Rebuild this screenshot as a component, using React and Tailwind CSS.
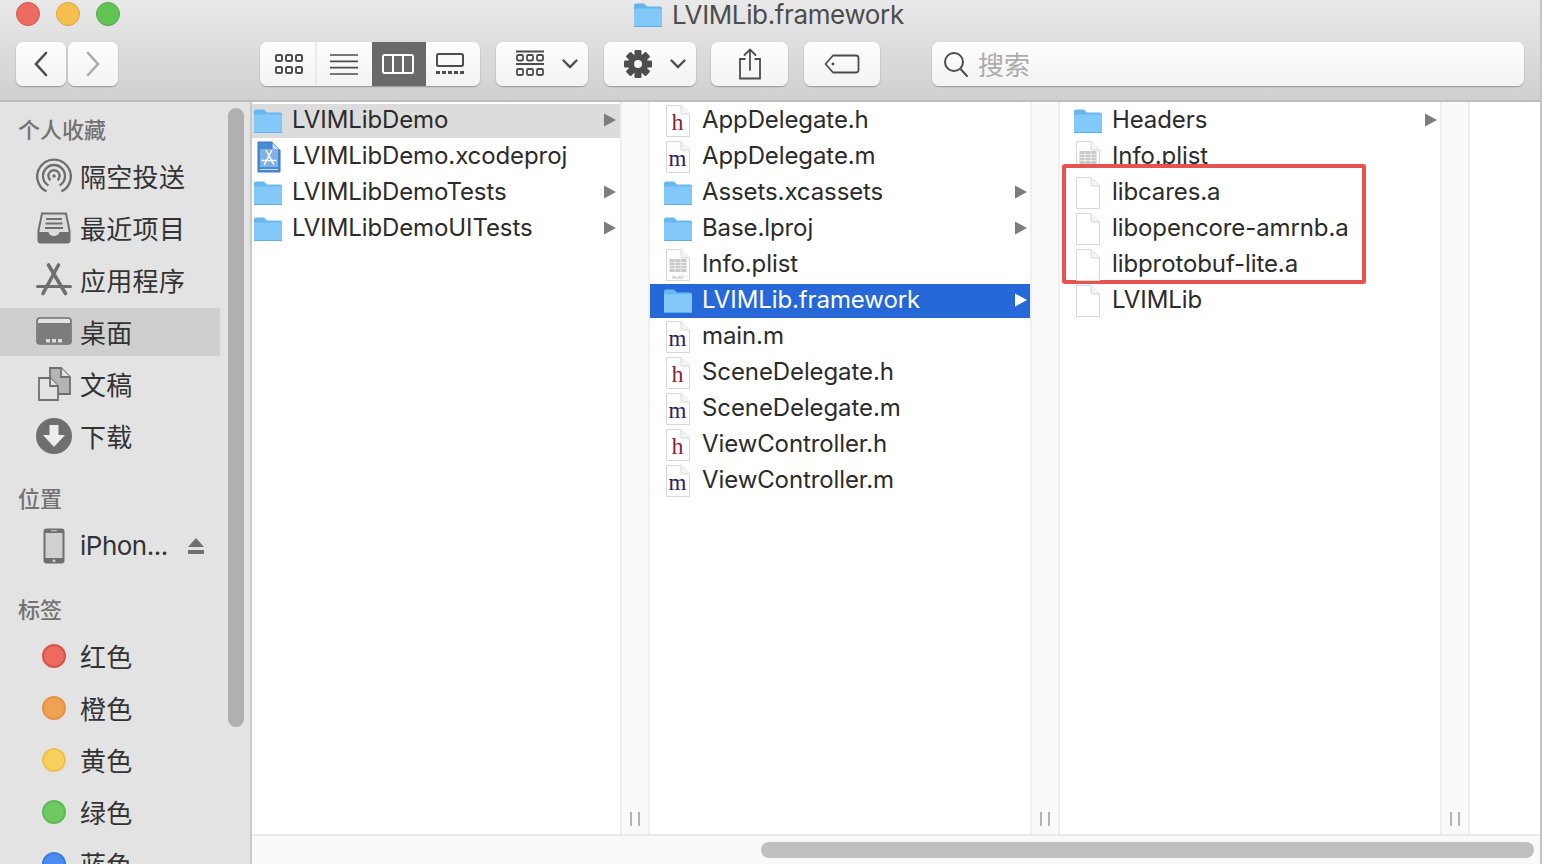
import React from "react";

const CJK = "font-['Noto_Sans_CJK_SC','Noto_Sans',sans-serif]";
const UI = "font-['Inter','Noto_Sans_CJK_SC',sans-serif]";

function Folder({ title }) {
  return (
    <svg width="30" height="26" viewBox="0 0 30 26" className="shrink-0">
      <path d="M1 3.5a2 2 0 0 1 2-2h8l3 3h13a2 2 0 0 1 2 2v4H1z" fill={title ? "#63b4ee" : "#68b8f0"} />
      <rect x="1" y="6.5" width="28" height="18.5" rx="1.5" fill="#82c9fa" />
      <rect x="1" y="24" width="28" height="1" fill="#62aee6" />
    </svg>
  );
}

function Page({ children }) {
  return (
    <svg width="30" height="34" viewBox="0 0 30 34" className="shrink-0">
      <path d="M3.5 1.5H18L26.5 10V32.5H3.5Z" fill="#fff" stroke="#d8d8d8" />
      <path d="M18 1.5V10H26.5" fill="#f4f4f4" stroke="#d8d8d8" />
      {children}
    </svg>
  );
}

function SourceFile({ letter }) {
  return (
    <Page>
      <text
        x="14.5"
        y="26"
        textAnchor="middle"
        fontFamily="Liberation Serif, serif"
        fontSize={letter === "h" ? 24 : 23}
        fill={letter === "h" ? "#8c2233" : "#30205f"}
      >
        {letter}
      </text>
    </Page>
  );
}

function Plist() {
  return (
    <Page>
      <rect x="6.5" y="11" width="17" height="13" fill="#c9c9c9" />
      <path d="M6.5 14.5h17M6.5 17.5h17M6.5 20.5h17M12 11v13M18 11v13" stroke="#f4f4f4" strokeWidth="0.8" />
      <text x="15" y="30.5" textAnchor="middle" fontFamily="Liberation Sans, sans-serif" fontSize="4.2" fill="#8a8a8a">
        PLIST
      </text>
    </Page>
  );
}

function Xcodeproj() {
  return (
    <svg width="30" height="34" viewBox="0 0 30 34" className="shrink-0">
      <path d="M5 2H19L27 10V32H5Z" fill="#4a8bd6" stroke="#3a76c0" />
      <path d="M19 2V10H27" fill="#c4dcf5" stroke="#3a76c0" />
      <rect x="7" y="9" width="18" height="18" fill="#7fb0e8" />
      <path d="M19 10L11 25M13 10L21 25M8.5 20.5h15" stroke="#fff" strokeWidth="1.5" fill="none" />
      <rect x="7" y="29" width="18" height="1" fill="#c4dcf5" />
    </svg>
  );
}

function Row({ name, icon, arrow, active, selected, scrolled }) {
  return (
    <div className="h-9 pt-[2px]">
      <div
        className={`h-[34px] flex items-center text-[24px] whitespace-nowrap ${
          selected ? "bg-[#2668d8] text-white" : active ? "bg-[#dcdcdc] text-[#2b2b2b]" : "text-[#2b2b2b]"
        } ${scrolled ? "pl-[1px]" : "pl-[13px]"}`}
      >
        <span className={`flex justify-start items-center shrink-0 ${scrolled ? "w-[39px]" : "w-[38px]"}`}>{icon}</span>
        <span className={`flex-1 tracking-[-0.1px] pb-[2px] ${scrolled ? "" : "pl-[1px]"}`}>{name}</span>
        {arrow && (
          <svg width="14" height="14" viewBox="0 0 14 14" className={`shrink-0 -mt-[2px] ${scrolled ? "mr-[3px]" : "mr-[2px]"}`}>
            <path d="M1 0.5L13 7L1 13.5Z" fill={selected ? "#fff" : "#7d7d7d"} />
          </svg>
        )}
      </div>
    </div>
  );
}

function Gutter() {
  return (
    <div className="w-[30px] shrink-0 bg-[#fafafa] border-x-2 border-[#efefef] flex items-end justify-center gap-[6px] pb-2">
      <span className="w-[2px] h-[14px] bg-[#b5b5b5]" />
      <span className="w-[2px] h-[14px] bg-[#b5b5b5]" />
    </div>
  );
}

function NavBtn({ children, className = "" }) {
  return (
    <div
      className={`h-[44px] rounded-[7px] bg-linear-to-b from-[#fdfdfd] to-[#f3f3f3] shadow-[0_1px_1.5px_rgba(0,0,0,0.3)] flex items-center justify-center ${className}`}
    >
      {children}
    </div>
  );
}

function Chevron() {
  return (
    <svg width="18" height="12" viewBox="0 0 18 12">
      <path d="M2.5 2.5L9 9L15.5 2.5" fill="none" stroke="#4d4d4d" strokeWidth="2.4" strokeLinecap="round" />
    </svg>
  );
}

function Gear() {
  const teeth = [0, 45, 90, 135];
  return (
    <svg width="30" height="30" viewBox="0 0 30 30">
      {teeth.map((r) => (
        <rect key={r} x="11.5" y="1" width="7" height="28" rx="1" fill="#4d4d4d" transform={`rotate(${r} 15 15)`} />
      ))}
      <circle cx="15" cy="15" r="10" fill="#4d4d4d" />
      <circle cx="15" cy="15" r="4" fill="#f9f9f9" />
    </svg>
  );
}

function Toolbar() {
  return (
    <div className="h-[102px] shrink-0 bg-linear-to-b from-[#e9e9e9] to-[#d0d0d0] border-b-2 border-[#bdbdbd]">
      <div className="h-[42px] flex items-start pl-4 pt-[2px]">
        <div className="flex gap-4">
          <span className="w-6 h-6 rounded-full bg-[#ec6a5f] border border-[#d5564c]" />
          <span className="w-6 h-6 rounded-full bg-[#f6bd4f] border border-[#dea63c]" />
          <span className="w-6 h-6 rounded-full bg-[#61c354] border border-[#52a846]" />
        </div>
        <div className="ml-[513px] flex items-center gap-[9px] -mt-[2px]">
          <Folder title />
          <span className={`${UI} text-[26px] leading-[30px] text-[#4c4c4c] tracking-[-0.37px]`}>LVIMLib.framework</span>
        </div>
      </div>
      <div className="flex pl-4 pr-4">
        <div className="flex gap-[2px]">
          <NavBtn className="w-[50px]">
            <svg width="18" height="26" viewBox="0 0 18 26">
              <path d="M14 2L4 13L14 24" fill="none" stroke="#4d4d4d" strokeWidth="2.6" strokeLinecap="round" />
            </svg>
          </NavBtn>
          <NavBtn className="w-[50px]">
            <svg width="18" height="26" viewBox="0 0 18 26">
              <path d="M4 2L14 13L4 24" fill="none" stroke="#ababab" strokeWidth="2.6" strokeLinecap="round" />
            </svg>
          </NavBtn>
        </div>

        <NavBtn className="ml-[142px] w-[220px] overflow-hidden !justify-start">
          <div className="w-[57px] h-full flex items-center justify-center pl-[3px] border-r-2 border-[#ebebeb]">
            <svg width="30" height="22" viewBox="0 0 30 22" fill="none" stroke="#4d4d4d" strokeWidth="2">
              <rect x="2" y="2" width="6" height="6" rx="1.5" />
              <rect x="12" y="2" width="6" height="6" rx="1.5" />
              <rect x="22" y="2" width="6" height="6" rx="1.5" />
              <rect x="2" y="14" width="6" height="6" rx="1.5" />
              <rect x="12" y="14" width="6" height="6" rx="1.5" />
              <rect x="22" y="14" width="6" height="6" rx="1.5" />
            </svg>
          </div>
          <div className="w-[55px] h-full flex items-center justify-center pr-[2px]">
            <svg width="30" height="22" viewBox="0 0 30 22" stroke="#4d4d4d" strokeWidth="1.7">
              <path d="M1 2h28M1 8.3h28M1 14.6h28M1 21h28" />
            </svg>
          </div>
          <div className="w-[54px] h-full flex items-center justify-center pr-[2px] bg-[#696969]">
            <svg width="32" height="20" viewBox="0 0 32 20" fill="none" stroke="#fff" strokeWidth="2">
              <rect x="1" y="1" width="30" height="18" rx="1.5" />
              <path d="M11 1v18M21 1v18" />
            </svg>
          </div>
          <div className="w-[54px] h-full flex items-center pl-[9px]">
            <svg width="30" height="22" viewBox="0 0 30 22" fill="none" stroke="#4d4d4d" strokeWidth="2">
              <rect x="2" y="1" width="26" height="12" rx="1.5" />
              <path d="M1 19.5h28" strokeDasharray="4 2" strokeWidth="3" />
            </svg>
          </div>
        </NavBtn>

        <NavBtn className="ml-4 w-[92px] gap-4 !justify-start pl-[19px]">
          <svg width="30" height="28" viewBox="0 0 30 28" fill="none" stroke="#4d4d4d" strokeWidth="1.8">
            <path d="M1 1.5h28M1 14h28" />
            <rect x="2" y="5" width="6" height="5.5" rx="1.2" />
            <rect x="12" y="5" width="6" height="5.5" rx="1.2" />
            <rect x="22" y="5" width="6" height="5.5" rx="1.2" />
            <rect x="2" y="19" width="6" height="6" rx="1.2" />
            <rect x="12" y="19" width="6" height="6" rx="1.2" />
            <rect x="22" y="19" width="6" height="6" rx="1.2" />
          </svg>
          <Chevron />
        </NavBtn>

        <NavBtn className="ml-4 w-[92px] gap-4 !justify-start pl-[19px]">
          <Gear />
          <Chevron />
        </NavBtn>

        <NavBtn className="ml-[15px] w-[77px]">
          <svg width="24" height="32" viewBox="0 0 24 32" fill="none" stroke="#4d4d4d" strokeWidth="1.8">
            <path d="M7.5 11H2v19.5h20V11h-5.5" />
            <path d="M12 22V2M6.5 7L12 1.5L17.5 7" strokeLinecap="round" />
          </svg>
        </NavBtn>

        <NavBtn className="ml-4 w-[76px]">
          <svg width="36" height="20" viewBox="0 0 36 20" fill="none" stroke="#4d4d4d" strokeWidth="1.8">
            <path d="M9 1.5H32a2.5 2.5 0 0 1 2.5 2.5V16a2.5 2.5 0 0 1-2.5 2.5H9L1.5 10Z" strokeLinejoin="round" />
            <circle cx="9" cy="10" r="1.4" fill="#4d4d4d" stroke="none" />
          </svg>
        </NavBtn>

        <NavBtn className="ml-[52px] flex-1 !justify-start pl-[11px] gap-[9px]">
          <svg width="26" height="28" viewBox="0 0 26 28" fill="none" stroke="#4d4d4d" strokeWidth="2">
            <circle cx="11" cy="12" r="9" />
            <path d="M17.5 19L24 26" strokeLinecap="round" />
          </svg>
          <span className={`${CJK} text-[26px] leading-none text-[#ababab]`}>搜索</span>
        </NavBtn>
      </div>
    </div>
  );
}

const SIDE_ICONS = {
  airdrop: (
    <svg width="36" height="36" viewBox="0 0 36 36" fill="none" stroke="#6f6f6f" strokeWidth="2.4">
      <path d="M10.5 33.5A16.8 16.8 0 1 1 25.5 33.5" />
      <path d="M12.5 27.5A11 11 0 1 1 23.5 27.5" />
      <path d="M14.5 22.2A5.6 5.6 0 1 1 21.5 22.2" />
      <circle cx="18" cy="18" r="1.8" fill="#6f6f6f" stroke="none" />
    </svg>
  ),
  recents: (
    <svg width="36" height="36" viewBox="0 0 36 36">
      <path d="M6 3.5h24l3.5 17v10a2 2 0 0 1-2 2h-27a2 2 0 0 1-2-2v-10Z" fill="#dcdcdc" stroke="#6f6f6f" strokeWidth="2" />
      <path d="M10 9h16M9.5 13.5h17M9 18h18" stroke="#6f6f6f" strokeWidth="1.8" />
      <path d="M2.5 22h10a5.5 4 0 0 0 11 0h10v8.5a2 2 0 0 1-2 2h-27a2 2 0 0 1-2-2Z" fill="#6f6f6f" />
    </svg>
  ),
  apps: (
    <svg width="36" height="36" viewBox="0 0 36 36" fill="none" stroke="#6f6f6f" strokeLinecap="round">
      <path d="M12.5 3L29.5 31.5" strokeWidth="3.6" />
      <path d="M22.5 3L7 31.5" strokeWidth="3.6" />
      <path d="M1.5 24.5h33" strokeWidth="3" />
    </svg>
  ),
  desktop: (
    <svg width="36" height="30" viewBox="0 0 36 30">
      <rect x="1" y="1" width="34" height="26" rx="3" fill="#e3e3e3" stroke="#6f6f6f" strokeWidth="1.6" />
      <path d="M1.5 6h33v19a2 2 0 0 1-2 2h-29a2 2 0 0 1-2-2Z" fill="#7c7c7c" />
      <rect x="10" y="22" width="4" height="3.5" fill="#dcdcdc" />
      <rect x="16" y="22" width="4" height="3.5" fill="#dcdcdc" />
      <rect x="22" y="22" width="4" height="3.5" fill="#dcdcdc" />
    </svg>
  ),
  docs: (
    <svg width="36" height="36" viewBox="0 0 36 36" stroke="#6f6f6f" strokeWidth="1.8">
      <path d="M14 2h11l9 9v17H14Z" fill="#b4b4b4" />
      <path d="M25 2v9h9" fill="#e3e3e3" />
      <path d="M3 12h11l8 8v14H3Z" fill="#e3e3e3" />
      <path d="M14 12v8h8" fill="#e3e3e3" />
    </svg>
  ),
  downloads: (
    <svg width="36" height="36" viewBox="0 0 36 36">
      <circle cx="18" cy="18" r="18" fill="#6f6f6f" />
      <path d="M13.5 7h9v10h6.5L18 29L7 17h6.5Z" fill="#ededed" />
    </svg>
  ),
  iphone: (
    <svg width="22" height="36" viewBox="0 0 22 36">
      <rect x="0.5" y="0.5" width="21" height="35" rx="3" fill="#6f6f6f" />
      <rect x="2.5" y="5" width="17" height="25" fill="#d0d0d0" />
      <rect x="8" y="2.2" width="6" height="1" fill="#d0d0d0" />
      <circle cx="11" cy="32.8" r="1.4" fill="#d0d0d0" />
    </svg>
  ),
};

function SideHead({ label, className }) {
  return (
    <div className={`pl-[18px] ${className}`}>
      <span className={`${CJK} block text-[22px] leading-[28px] font-medium text-[#737373]`}>{label}</span>
    </div>
  );
}

function SideItem({ icon, label, active }) {
  return (
    <div className="h-[52px] flex items-center">
      <div className={`h-12 w-[220px] flex items-center pl-9 ${active ? "bg-[#cfcfcf]" : ""}`}>
        <span className="w-9 flex justify-center shrink-0">{icon}</span>
        <span className={`${CJK} ml-2 text-[26px] leading-none text-[#333] tracking-[0.3px]`}>{label}</span>
      </div>
    </div>
  );
}

function TagItem({ label, fill, ring }) {
  return (
    <div className="h-[52px] flex items-center pl-[42px]">
      <span className="w-6 h-6 rounded-full border-2 shrink-0" style={{ backgroundColor: fill, borderColor: ring }} />
      <span className={`${CJK} ml-[14px] text-[26px] leading-none text-[#333] tracking-[0.3px]`}>{label}</span>
    </div>
  );
}

function Sidebar() {
  return (
    <aside className="relative w-[252px] shrink-0 h-full bg-[#e3e3e3] border-r-2 border-[#c9c9c9] overflow-hidden">
      <SideHead label="个人收藏" className="h-[48px] pt-[12px]" />
      <SideItem icon={SIDE_ICONS.airdrop} label="隔空投送" />
      <SideItem icon={SIDE_ICONS.recents} label="最近项目" />
      <SideItem icon={SIDE_ICONS.apps} label="应用程序" />
      <SideItem icon={SIDE_ICONS.desktop} label="桌面" active />
      <SideItem icon={SIDE_ICONS.docs} label="文稿" />
      <SideItem icon={SIDE_ICONS.downloads} label="下载" />
      <SideHead label="位置" className="h-[58px] pt-[21px]" />
      <div className="h-[52px] flex items-center pl-[43px]">
        {SIDE_ICONS.iphone}
        <span className={`${UI} ml-[15px] text-[26px] leading-none text-[#333] tracking-[-0.5px]`}>iPhon...</span>
        <svg width="18" height="18" viewBox="0 0 18 18" className="ml-[19px]">
          <path d="M9 1L17 10H1Z M1 13h16v4H1Z" fill="#6f6f6f" />
        </svg>
      </div>
      <SideHead label="标签" className="h-[58px] pt-[22px]" />
      <TagItem label="红色" fill="#ec6a5f" ring="#d9534a" />
      <TagItem label="橙色" fill="#efa253" ring="#e39343" />
      <TagItem label="黄色" fill="#f6cf5f" ring="#efc14b" />
      <TagItem label="绿色" fill="#6fc963" ring="#5cba52" />
      <TagItem label="蓝色" fill="#4a8cf0" ring="#3b7be0" />
      <div className="absolute left-[228px] top-[6px] w-4 h-[619px] rounded-lg bg-[#b0b0b0]" />
    </aside>
  );
}

const COL_1 = [
  { name: "LVIMLibDemo", icon: <Folder />, arrow: true, active: true },
  { name: "LVIMLibDemo.xcodeproj", icon: <Xcodeproj /> },
  { name: "LVIMLibDemoTests", icon: <Folder />, arrow: true },
  { name: "LVIMLibDemoUITests", icon: <Folder />, arrow: true },
];

const COL_2 = [
  { name: "AppDelegate.h", icon: <SourceFile letter="h" /> },
  { name: "AppDelegate.m", icon: <SourceFile letter="m" /> },
  { name: "Assets.xcassets", icon: <Folder />, arrow: true },
  { name: "Base.lproj", icon: <Folder />, arrow: true },
  { name: "Info.plist", icon: <Plist /> },
  { name: "LVIMLib.framework", icon: <Folder />, arrow: true, selected: true },
  { name: "main.m", icon: <SourceFile letter="m" /> },
  { name: "SceneDelegate.h", icon: <SourceFile letter="h" /> },
  { name: "SceneDelegate.m", icon: <SourceFile letter="m" /> },
  { name: "ViewController.h", icon: <SourceFile letter="h" /> },
  { name: "ViewController.m", icon: <SourceFile letter="m" /> },
];

function Browser() {
  return (
    <div className="flex-1 min-w-0 h-full flex flex-col bg-white">
      <div className={`flex-1 min-h-0 flex ${UI}`}>
        <div className="w-[368px] shrink-0">
          {COL_1.map((row) => (
            <Row key={row.name} {...row} scrolled />
          ))}
        </div>
        <Gutter />
        <div className="w-[380px] shrink-0">
          {COL_2.map((row) => (
            <Row key={row.name} {...row} />
          ))}
        </div>
        <Gutter />
        <div className="w-[380px] shrink-0">
          <Row name="Headers" icon={<Folder />} arrow />
          <Row name="Info.plist" icon={<Plist />} />
          {/* red marker from the screenshot, sits over Info.plist */}
          <div className="relative isolate">
            <div className="absolute -z-10 left-[2px] -top-[10px] w-[304px] h-[120px] bg-white border-4 border-[#e8524e] rounded-[3px]" />
            <Row name="libcares.a" icon={<Page />} />
            <Row name="libopencore-amrnb.a" icon={<Page />} />
            <Row name="libprotobuf-lite.a" icon={<Page />} />
          </div>
          <Row name="LVIMLib" icon={<Page />} />
        </div>
        <Gutter />
        <div className="flex-1" />
      </div>
      <div className="h-[30px] shrink-0 bg-[#f9f9f9] border-t-2 border-[#e8e8e8] flex items-center justify-end pr-[6px]">
        <div className="w-[773px] h-4 rounded-lg bg-[#bfbfbf]" />
      </div>
    </div>
  );
}

export default function App() {
  return (
    <div className="w-[1542px] h-[864px] overflow-hidden flex flex-col bg-white border-r-2 border-[#c4c4c4]">
      <Toolbar />
      <div className="flex-1 min-h-0 flex">
        <Sidebar />
        <Browser />
      </div>
    </div>
  );
}
